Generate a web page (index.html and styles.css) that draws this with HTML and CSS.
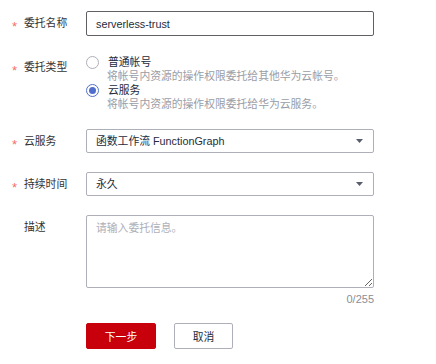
FILE: index.html
```html
<!DOCTYPE html>
<html lang="zh-CN">
<head>
<meta charset="utf-8">
<title>创建委托</title>
<link rel="stylesheet" href="styles.css">
</head>
<body>
<form class="form">
  <div class="row">
    <div class="label"><span class="star">*</span>委托名称</div>
    <div class="control">
      <input class="input input-active" type="text" value="serverless-trust">
    </div>
  </div>

  <div class="row row-radio">
    <div class="label"><span class="star">*</span>委托类型</div>
    <div class="control">
      <div class="radio-item">
        <span class="radio"></span>
        <span class="radio-text">普通帐号</span>
      </div>
      <div class="radio-desc">将帐号内资源的操作权限委托给其他华为云帐号。</div>
      <div class="radio-item">
        <span class="radio radio-checked"></span>
        <span class="radio-text">云服务</span>
      </div>
      <div class="radio-desc">将帐号内资源的操作权限委托给华为云服务。</div>
    </div>
  </div>

  <div class="row">
    <div class="label"><span class="star">*</span>云服务</div>
    <div class="control">
      <div class="select">
        <span class="select-text">函数工作流 FunctionGraph</span>
        <svg class="caret" width="7" height="4" viewBox="0 0 7 4"><path d="M0 0H7L3.5 4Z" fill="#575d6c"/></svg>
      </div>
    </div>
  </div>

  <div class="row">
    <div class="label"><span class="star">*</span>持续时间</div>
    <div class="control">
      <div class="select">
        <span class="select-text">永久</span>
        <svg class="caret" width="7" height="4" viewBox="0 0 7 4"><path d="M0 0H7L3.5 4Z" fill="#575d6c"/></svg>
      </div>
    </div>
  </div>

  <div class="row row-textarea">
    <div class="label"><span class="star"></span>描述</div>
    <div class="control">
      <textarea class="textarea" placeholder="请输入委托信息。"></textarea>
      <div class="counter">0/255</div>
    </div>
  </div>

  <div class="row row-buttons">
    <div class="label"></div>
    <div class="control buttons">
      <button type="button" class="btn btn-primary">下一步</button>
      <button type="button" class="btn btn-default">取消</button>
    </div>
  </div>
</form>
</body>
</html>
```

FILE: styles.css
```css
* { box-sizing: border-box; }

body {
  margin: 0;
  background: #fff;
  font-family: "Liberation Sans", "Noto Sans CJK SC", sans-serif;
  font-size: 10.8px;
  color: #252b3a;
}

.form {
  padding-top: 11px;
}

.row {
  display: flex;
  align-items: flex-start;
  margin-bottom: 19px;
}

.label {
  width: 86px;
  height: 24px;
  flex: none;
  padding-left: 12px;
  line-height: 24px;
  font-size: 10.8px;
  color: #333;
}

.star {
  display: inline-block;
  width: 12px;
  height: 24px;
  line-height: 31px;
  vertical-align: top;
  color: #f66f6a;
  font-size: 13px;
}

.control {
  width: 288px;
  flex: none;
}

.input {
  display: block;
  width: 288px;
  height: 25px;
  padding: 0 9px;
  border: 1px solid #adb0b8;
  border-radius: 2px;
  font-family: inherit;
  font-size: 10.8px;
  color: #252b3a;
  outline: none;
}

.input-active {
  border-color: #5e6066;
}

.row-radio {
  margin-bottom: 18px;
}

.radio-item {
  display: flex;
  align-items: center;
  height: 14px;
}

.radio {
  width: 13px;
  height: 13px;
  border: 1px solid #adb0b8;
  border-radius: 50%;
  flex: none;
  display: flex;
  align-items: center;
  justify-content: center;
  background: #fff;
}

.radio-checked {
  border-color: #526ecc;
}

.radio-checked::after {
  content: "";
  width: 7px;
  height: 7px;
  border-radius: 50%;
  background: #526ecc;
}

.radio-text {
  margin-left: 9px;
  line-height: 14px;
  color: #252b3a;
}

.radio-desc {
  padding-left: 21px;
  line-height: 14px;
  height: 14px;
  color: #9a9da6;
  white-space: nowrap;
}

.select {
  display: flex;
  align-items: center;
  justify-content: space-between;
  width: 288px;
  height: 24px;
  padding: 0 10px 0 9px;
  border: 1px solid #adb0b8;
  border-radius: 2px;
  color: #252b3a;
}

.select-text {
  line-height: 22px;
}

.caret {
  display: block;
}

.row-textarea {
  margin-bottom: 0;
}

.textarea {
  display: block;
  width: 288px;
  height: 73px;
  padding: 4px 9px;
  border: 1px solid #adb0b8;
  border-radius: 2px;
  font-family: inherit;
  font-size: 10.8px;
  line-height: 16px;
  color: #252b3a;
  resize: vertical;
  outline: none;
}

.textarea::placeholder {
  color: #adb0b8;
}

.counter {
  text-align: right;
  line-height: 18px;
  color: #8a8e99;
  font-size: 11px;
  margin-top: 2px;
}

.row-buttons {
  margin-top: 15px;
  margin-bottom: 0;
}

.buttons {
  display: flex;
  gap: 18px;
}

.btn {
  height: 26px;
  border-radius: 2px;
  font-family: inherit;
  font-size: 10.8px;
  padding: 0;
  cursor: pointer;
}

.btn-primary {
  width: 70px;
  background: #c7000b;
  border: 1px solid #c7000b;
  color: #fff;
}

.btn-default {
  width: 59px;
  background: #fff;
  border: 1px solid #adb0b8;
  color: #252b3a;
}
```
